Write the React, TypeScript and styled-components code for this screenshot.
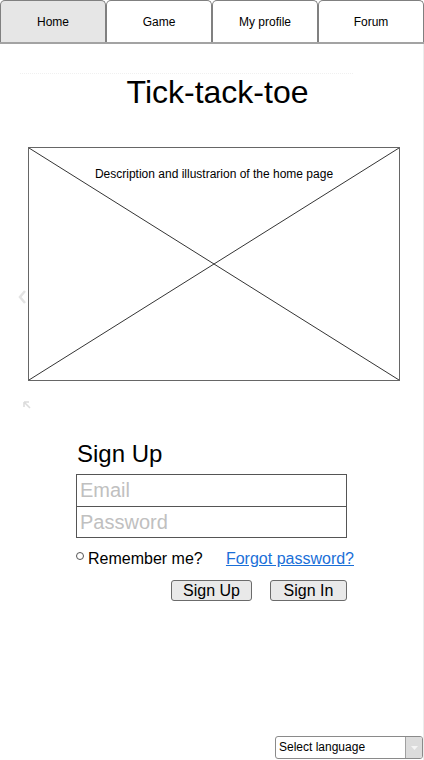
import React from "react";
import styled, { createGlobalStyle } from "styled-components";

const Global = createGlobalStyle`
  html, body { margin: 0; padding: 0; background: #fff; }
  body { font-family: "Liberation Sans", Arial, sans-serif; color: #000; }
  * { box-sizing: border-box; }
`;

const Page = styled.div`
  position: relative;
  width: 424px;
  height: 760px;
  display: flex;
  flex-direction: column;
  overflow: hidden;
`;

const TabBar = styled.nav`
  display: flex;
  height: 44px;
  border-bottom: 2px solid #a3a3a3;
`;

const Tab = styled.div<{ $active?: boolean }>`
  flex: 1;
  height: 42px;
  display: flex;
  align-items: center;
  justify-content: center;
  border: 1px solid #808080;
  border-bottom: none;
  border-radius: 5px 5px 0 0;
  background: ${(p) => (p.$active ? "#e6e6e6" : "#fff")};
  font-size: 12px;
`;

const Body = styled.main`
  position: relative;
  flex: 1;
  display: flex;
  flex-direction: column;
  border-right: 1px solid #ececec;
`;

const Divider = styled.div`
  margin: 29px 0 0 20px;
  width: 333px;
  border-top: 1px dotted #f0f0f0;
`;

const Title = styled.h1`
  margin: 0;
  padding-left: 12px;
  text-align: center;
  font-size: 32px;
  font-weight: normal;
  line-height: 37px;
`;

const Illustration = styled.div`
  position: relative;
  margin: 36px 0 0 28px;
  width: 372px;
  height: 234px;
  border: 1px solid #666;
  display: flex;
  justify-content: center;
`;

const Cross = styled.svg`
  position: absolute;
  inset: 0;
  width: 100%;
  height: 100%;
`;

const Caption = styled.p`
  position: relative;
  margin: 19px 0 0;
  font-size: 12px;
  line-height: 14px;
`;

const Ghost = styled.svg<{ $top: number; $left: number }>`
  position: absolute;
  top: ${(p) => p.$top}px;
  left: ${(p) => p.$left}px;
`;

const Form = styled.section`
  margin: 59px 0 0 76px;
  width: 271px;
  display: flex;
  flex-direction: column;
`;

const FormTitle = styled.h2`
  margin: 0 0 6px 1px;
  font-size: 24px;
  font-weight: normal;
  line-height: 28px;
`;

const Fields = styled.div`
  display: flex;
  flex-direction: column;
  border: 1px solid #555;
`;

const Field = styled.input<{ $first?: boolean }>`
  height: 31px;
  border: none;
  border-top: ${(p) => (p.$first ? "none" : "1px solid #555")};
  padding: 0 3px;
  font-family: "Liberation Sans", Arial, sans-serif;
  font-size: 20px;
  outline: none;
  &::placeholder { color: #c0c0c0; }
`;

const OptionsRow = styled.div`
  margin-top: 12px;
  display: flex;
  align-items: flex-start;
  font-size: 16px;
  line-height: 18px;
`;

const Radio = styled.span`
  margin-top: 2px;
  width: 8px;
  height: 8px;
  border: 1px solid #555;
  border-radius: 50%;
  margin-right: 4px;
`;

const Link = styled.a`
  margin-left: auto;
  margin-right: -7px;
  color: #1a6fd8;
  text-decoration: underline;
`;

const Buttons = styled.div`
  margin-top: 12px;
  display: flex;
  justify-content: flex-end;
  gap: 18px;
`;

const Button = styled.button<{ $w: number }>`
  width: ${(p) => p.$w}px;
  height: 21px;
  padding: 0;
  border: 1px solid #6b6b6b;
  border-radius: 3px;
  background: #e9e9e9;
  font-family: "Liberation Sans", Arial, sans-serif;
  font-size: 16px;
  line-height: 19px;
  color: #000;
`;

const Footer = styled.footer`
  margin-top: auto;
  display: flex;
  justify-content: flex-end;
  padding: 0 0 1px 0;
`;

const Select = styled.div`
  width: 148px;
  height: 23px;
  display: flex;
  border: 1px solid #8a8a8a;
  border-radius: 3px;
  overflow: hidden;
  font-size: 12px;
`;

const SelectText = styled.span`
  flex: 1;
  padding-left: 3px;
  line-height: 21px;
`;

const SelectArrow = styled.span`
  width: 17px;
  background: #dcdcdc;
  border-left: 1px solid #a0a0a0;
  display: flex;
  align-items: center;
  justify-content: center;
`;

export default function App() {
  return (
    <>
      <Global />
      <Page>
        <TabBar>
          <Tab $active>Home</Tab>
          <Tab>Game</Tab>
          <Tab>My profile</Tab>
          <Tab>Forum</Tab>
        </TabBar>
        <Body>
          <Divider />
          <Title>Tick-tack-toe</Title>
          <Illustration>
            <Cross viewBox="0 0 100 100" preserveAspectRatio="none">
              <line x1="0" y1="0" x2="100" y2="100" stroke="#333" strokeWidth="1" vectorEffect="non-scaling-stroke" />
              <line x1="100" y1="0" x2="0" y2="100" stroke="#333" strokeWidth="1" vectorEffect="non-scaling-stroke" />
            </Cross>
            <Caption>Description and illustrarion of the home page</Caption>
          </Illustration>
          <Ghost $top={245} $left={17} width="10" height="16" viewBox="0 0 10 16">
            <path d="M8 2 L3 8 L8 14" fill="none" stroke="#e4e4e4" strokeWidth="2.5" />
          </Ghost>
          <Ghost $top={356} $left={22} width="10" height="10" viewBox="0 0 10 10">
            <path d="M2 2 L8 8 M2 2 L2 7 M2 2 L7 2" fill="none" stroke="#dcdcdc" strokeWidth="1.6" />
          </Ghost>
          <Form>
            <FormTitle>Sign Up</FormTitle>
            <Fields>
              <Field $first placeholder="Email" />
              <Field placeholder="Password" type="password" />
            </Fields>
            <OptionsRow>
              <Radio />
              <span>Remember me?</span>
              <Link href="#">Forgot password?</Link>
            </OptionsRow>
            <Buttons>
              <Button $w={81}>Sign Up</Button>
              <Button $w={77}>Sign In</Button>
            </Buttons>
          </Form>
          <Footer>
            <Select>
              <SelectText>Select language</SelectText>
              <SelectArrow>
                <svg width="7" height="4" viewBox="0 0 7 4">
                  <path d="M0 0 L7 0 L3.5 4 Z" fill="#f4f4f4" />
                </svg>
              </SelectArrow>
            </Select>
          </Footer>
        </Body>
      </Page>
    </>
  );
}
